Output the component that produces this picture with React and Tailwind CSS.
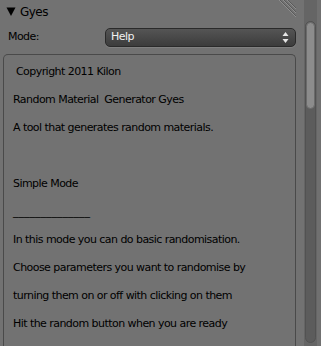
import { Fragment } from "react";

const lines = [
  " Copyright 2011 Kilon",
  "Random Material  Generator Gyes",
  "A tool that generates random materials.",
  "",
  "Simple Mode",
  "______________",
  "In this mode you can do basic randomisation.",
  "Choose parameters you want to randomise by",
  "turning them on or off with clicking on them",
  "Hit the random button when you are ready",
  "",
];

function Grip() {
  return (
    <svg className="absolute right-[7px] top-0" width="18" height="18" viewBox="0 0 18 18">
      {[0, 4, 8].map((o) => (
        <Fragment key={o}>
          <line x1={o} y1="0" x2="17" y2={17 - o} stroke="#8e8e8e" strokeWidth="1" />
          <line x1={o + 1} y1="0" x2="17" y2={16 - o} stroke="#5a5a5a" strokeWidth="1" />
        </Fragment>
      ))}
    </svg>
  );
}

export default function App() {
  return (
    <div
      className="flex h-[346px] w-[321px] overflow-hidden bg-[#727272] text-[11px] tracking-[-0.55px] text-black"
      style={{ fontFamily: '"DejaVu Sans", sans-serif' }}
    >
      <div className="relative flex h-[346px] w-[304px] shrink-0 flex-col overflow-hidden">
        <Grip />
        <div className="flex h-[22px] shrink-0 items-center pl-[6px] pt-[1px]">
          <svg width="10" height="9" viewBox="0 0 10 9" className="mr-[4px]">
            <path d="M0.5 0.5 L9.5 0.5 L5 9 Z" fill="#000" />
          </svg>
          <span className="text-[12px]">Gyes</span>
        </div>
        <div className="mt-[6px] flex h-[19px] shrink-0 items-center">
          <span className="w-[105px] pl-[8px]">Mode:</span>
          <div className="flex h-[19px] w-[191px] items-center justify-between rounded-[5px] border border-[#2a2a2a] bg-gradient-to-b from-[#555555] to-[#3c3c3c] pl-[5px] pr-[6px] text-[#f0f0f0] shadow-[0_1px_0_#808080]">
            <span>Help</span>
            <svg width="7" height="13" viewBox="0 0 7 13">
              <path d="M3.5 1 L6.5 5 L0.5 5 Z" fill="#e6e6e6" />
              <path d="M3.5 12 L6.5 8 L0.5 8 Z" fill="#e6e6e6" />
            </svg>
          </div>
        </div>
        <div className="ml-[3px] mt-[7px] h-[320px] w-[293px] shrink-0 rounded-t-[5px] border border-b-0 border-[#4a4a4a] pl-[9px] pt-[3px]">
          {lines.map((t, i) => (
            <div
              key={i}
              className={`h-[28px] whitespace-pre leading-[28px] ${t.startsWith("_") ? "tracking-normal" : ""}`}
            >
              {t}
            </div>
          ))}
        </div>
      </div>
      <div className="flex w-[13px] shrink-0 flex-col bg-[#656565] pl-[1px] pt-[21px] pb-[3px]">
        <div className="flex w-[11px] flex-1 flex-col rounded-full border border-[#525252] bg-[#5c5c5c]">
          <div className="h-[87px] rounded-full border border-[#6a6a6a] bg-[#8c8c8c]" />
        </div>
      </div>
      <div className="w-[4px] shrink-0 bg-[#707070]" />
    </div>
  );
}
